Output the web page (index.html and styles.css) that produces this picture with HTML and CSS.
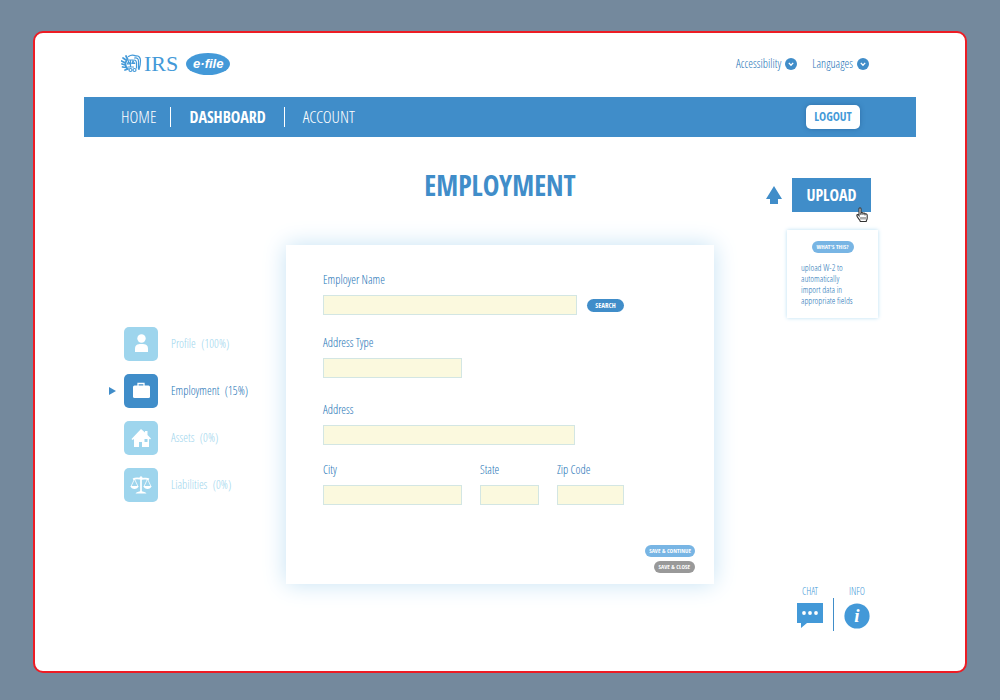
FILE: index.html
```html
<!DOCTYPE html>
<html lang="en">
<head>
<meta charset="utf-8">
<meta name="viewport" content="width=device-width, initial-scale=1">
<title>IRS e-file – Employment</title>
<link rel="stylesheet" href="styles.css">
</head>
<body>
<div class="screen">
  <header class="header">
    <a class="brand" href="#" aria-label="IRS e-file">
      <svg class="eagle" viewBox="0 0 42 38" fill="none" stroke="currentColor" stroke-width="2.4" stroke-linecap="round">
        <path d="M15 5c5-4 11-3 15-1M28 4c7-2 11 3 11 9s-1 12-3 18M27 8c6-1 8 2 8 7v15M26 12c4 0 5 3 5 7v9M14 12h10M19 13v13M15 15l-2 5h5zM24 14l-2 5h5zM14 26h11"/>
        <path d="M1 14l6 3M2 20l6 2M3 26l7 1M8 32l6-2M4 8l6 4M10 4l3 6M12 12c-4 5-4 12 1 18" stroke-width="3.500"/>
        <circle cx="19" cy="32" r="3"/><circle cx="27" cy="32" r="3"/>
      </svg>
      <span class="irs">IRS</span>
      <span class="efile">e·file</span>
    </a>
    <div class="tools">
      <button class="tool" type="button">Accessibility
        <svg class="chevron" viewBox="0 0 12 12"><circle cx="6" cy="6" r="6" fill="currentColor"/><path d="M3.800 4.900 6 7.300l2.200-2.400" fill="none" stroke="#fff" stroke-width="1.300"/></svg>
      </button>
      <button class="tool" type="button">Languages
        <svg class="chevron" viewBox="0 0 12 12"><circle cx="6" cy="6" r="6" fill="currentColor"/><path d="M3.800 4.900 6 7.300l2.200-2.400" fill="none" stroke="#fff" stroke-width="1.300"/></svg>
      </button>
    </div>
  </header>

  <nav class="nav" aria-label="Main">
    <a class="nav-link" href="#">HOME</a>
    <a class="nav-link current" href="#" aria-current="page">DASHBOARD</a>
    <a class="nav-link" href="#">ACCOUNT</a>
    <button class="logout" type="button">LOGOUT</button>
  </nav>

  <div class="content">
    <ul class="steps">
      <li><a class="step" href="#"><span class="step-icon"><svg viewBox="0 0 34 34" fill="#fff"><circle cx="17.500" cy="11.500" r="4.200"/><path d="M11 25v-3c0-4 2-5 6.500-5s6.500 1 6.500 5v3z"/></svg></span>Profile&nbsp; (100%)</a></li>
      <li><a class="step active" href="#" aria-current="step"><span class="step-icon"><svg viewBox="0 0 34 34"><path d="M14 12V9.500h6V12" fill="none" stroke="#fff" stroke-width="1.300"/><rect x="9" y="11.500" width="17" height="12.500" rx="1.500" fill="#fff"/></svg></span>Employment&nbsp; (15%)</a></li>
      <li><a class="step" href="#"><span class="step-icon"><svg viewBox="0 0 34 34" fill="#fff"><path fill-rule="evenodd" d="M17 8l4 3.500V10h2.500v4L27 17.500l-1 1-1-.8V26h-7v-5h-3v5H10v-8l-1.500 1-1-1zM20.500 18v3h3v-3z"/></svg></span>Assets&nbsp; (0%)</a></li>
      <li><a class="step" href="#"><span class="step-icon"><svg viewBox="0 0 34 34" fill="none" stroke="#fff"><path d="M9 11.200c3-1.400 5-.8 8-.4s5-1 8 .4M17 9v15" stroke-width="1.700"/><path d="M10.500 11 7 18.500M10.500 11l3.500 7.500M23.500 11 20 18.500M23.500 11l3.500 7.500" stroke-width=".8"/><path d="M6.500 18h8c-.5 4-7.500 4-8 0zM19.500 18h8c-.5 4-7.500 4-8 0zM11.500 25.500c1-2 3-1.500 5.500-2.500 2.500 1 4.500.5 5.500 2.500z" fill="#fff" stroke="none"/><circle cx="17" cy="9.800" r="1.500" fill="#fff" stroke="none"/></svg></span>Liabilities&nbsp; (0%)</a></li>
    </ul>

    <main class="main">
      <h1 class="title">EMPLOYMENT</h1>
      <form class="card">
        <div class="row">
          <div class="field name"><label for="employer">Employer Name</label><input id="employer" type="text"></div>
          <button class="pill search" type="button">SEARCH</button>
        </div>
        <div class="field medium"><label for="type">Address Type</label><input id="type" type="text"></div>
        <div class="field long"><label for="address">Address</label><input id="address" type="text"></div>
        <div class="row city-row">
          <div class="field medium"><label for="city">City</label><input id="city" type="text"></div>
          <div class="field state"><label for="state">State</label><input id="state" type="text"></div>
          <div class="field zip"><label for="zip">Zip Code</label><input id="zip" type="text"></div>
        </div>
        <div class="actions">
          <button class="pill light" type="submit">SAVE &amp; CONTINUE</button>
          <button class="pill gray" type="button">SAVE &amp; CLOSE</button>
        </div>
      </form>
    </main>

    <aside class="side">
      <div class="upload-row">
        <svg class="arrow" viewBox="0 0 16 18"><path d="M8 0l8 13h-4v5H4v-5H0z" fill="currentColor"/></svg>
        <div class="upload-wrap">
          <button class="upload" type="button">UPLOAD</button>
          <svg class="hand" viewBox="0 0 12 15"><path d="M3 8.500V2c0-1.700 2-1.700 2 0v4c.5-.8 1.800-.5 2 .4.600-.7 1.800-.3 2 .6 1-.6 2.200 0 2.200 1.200V11c0 2-1 2.300-1 3.500H4.300C4 12.500 1 10.500.8 8.500c0-1.200 1.500-1.200 2.200 0z" fill="#fff" stroke="#333" stroke-width="1.100"/><path d="M5 10v2.500M7 10v2.500M9 10v2.500M5 6v2M7 6.500V8M9 7v1.500" stroke="#333" stroke-width=".8"/></svg>
        </div>
      </div>
      <div class="tip">
        <button class="pill light" type="button">WHAT'S THIS?</button>
        <p class="tip-text">upload W-2 to automatically import data in appropriate fields</p>
      </div>
      <div class="help">
        <a class="help-link" href="#">CHAT
          <svg class="help-icon" viewBox="0 0 26 26"><path d="M0 0h26v20H10l-6 5v-5H0z" fill="currentColor"/><g fill="#fff"><circle cx="7" cy="10" r="1.900"/><circle cx="13" cy="10" r="1.900"/><circle cx="19" cy="10" r="1.900"/></g></svg>
        </a>
        <span class="divider"></span>
        <a class="help-link" href="#">INFO
          <svg class="help-icon" viewBox="0 0 26 26"><circle cx="13" cy="13" r="12.600" fill="currentColor"/><text class="info-i" x="13" y="19" text-anchor="middle">i</text></svg>
        </a>
      </div>
    </aside>
  </div>
</div>
</body>
</html>
```
FILE: styles.css
```css
:root {
  --blue: #408dc9;
  --sky: #4399d8;
  --deep: #2474b6;
  --pale: #9ed5ed;
  --narrow: "Open Sans Condensed Light", "Roboto Condensed", Roboto, sans-serif;
  --narrow-bold: "Open Sans Condensed", "Roboto Condensed", Roboto, sans-serif;
}
* { box-sizing: border-box; }
body {
  margin: 0;
  padding: 31px 33px 27px;
  min-height: 100vh;
  display: flex;
  background: #74899d;
  color: var(--blue);
  font: 300 12px/16px var(--narrow);
}
button, input { font: inherit; color: inherit; }
button { border: 0; padding: 0; background: none; cursor: pointer; }
a { color: inherit; text-decoration: none; }
svg { display: block; flex: none; }

.screen {
  flex: 1;
  display: flex;
  flex-direction: column;
  padding: 0 49px;
  background: #fff;
  border: 2px solid #ed1c24;
  border-radius: 10px;
}

.header {
  display: flex;
  justify-content: space-between;
  align-items: center;
  height: 64px;
  padding: 0 47px 3px 37px;
}
.brand { display: flex; align-items: center; color: var(--sky); }
.eagle { width: 21px; height: 19px; }
.irs { margin-left: 2px; font: 22px/24px "Liberation Serif", serif; }
.efile {
  width: 44px;
  margin-left: 8px;
  border-radius: 50%;
  background: var(--sky);
  color: #fff;
  font: italic bold 13px/22px "Liberation Sans", sans-serif;
  text-align: center;
}
.tools { display: flex; gap: 15px; color: var(--deep); }
.tool { display: flex; align-items: center; gap: 4px; font-size: 12px; }
.chevron { width: 12px; height: 12px; color: var(--blue); }

.nav {
  display: flex;
  align-items: center;
  height: 40px;
  padding: 0 56px 0 37px;
  background: var(--blue);
  color: #fff;
}
.nav-link { font-size: 17px; line-height: 20px; }
.nav-link + .nav-link { margin-left: 14px; padding-left: 18px; border-left: 1px solid #fff; }
.nav .current { font-family: var(--narrow-bold); font-size: 16px; font-weight: 700; }
.nav .current + .nav-link { margin-left: 18px; }
.logout {
  width: 54px;
  height: 24px;
  margin-left: auto;
  border-radius: 5px;
  background: #fff;
  box-shadow: 0 0 5px rgba(20, 70, 120, .4);
  color: var(--sky);
  font: 700 12px/16px var(--narrow-bold);
}

.content {
  flex: 1;
  display: grid;
  grid-template-columns: 1fr minmax(auto, 428px) 1fr;
}

.steps {
  display: grid;
  align-content: start;
  gap: 13px;
  margin: 0;
  padding: 190px 0 0 40px;
  list-style: none;
}
.step { position: relative; display: flex; align-items: center; gap: 13px; color: var(--pale); }
.step-icon { width: 34px; height: 34px; border-radius: 5px; background: var(--pale); }
.step.active { color: var(--deep); }
.active .step-icon { background: var(--blue); }
.active::before {
  content: "";
  position: absolute;
  left: -15px;
  border: solid transparent;
  border-width: 4px 0 4px 7px;
  border-left-color: var(--blue);
}

.main { padding-top: 30px; }
.title { margin: 0 0 42px; text-align: center; font: 700 28px/36px var(--narrow-bold); }
.card {
  padding: 27px 19px 11px 37px;
  background: #fff;
  box-shadow: 0 0 22px #c5e2f4;
}
.field { margin-bottom: 20px; }
.field label { display: block; margin-bottom: 7px; color: var(--deep); }
.field input {
  display: block;
  width: 100%;
  height: 20px;
  padding: 0 4px;
  border: 1px solid #d3e6e3;
  background: #fbf9de;
}
.row { display: flex; gap: 10px; }
.name { width: 254px; }
.medium { width: 139px; }
.long { width: 252px; margin-bottom: 17px; }
.card > .medium { margin-bottom: 24px; }
.city-row { gap: 18px; }
.state { width: 59px; }
.zip { width: 67px; }
.pill {
  height: 12px;
  padding: 0 4px;
  border-radius: 7px;
  color: #fff;
  font: 700 6px/12px var(--narrow-bold);
  white-space: nowrap;
}
.search { align-self: flex-end; width: 37px; height: 13px; margin-bottom: 23px; background: var(--blue); font-size: 7px; }
.light { background: #78b5e4; }
.gray { padding: 0 5px; background: #999; }
.actions { display: flex; flex-direction: column; align-items: flex-end; gap: 4px; margin-top: 20px; }

.side { display: flex; flex-direction: column; padding: 41px 38px 40px 0; }
.upload-row { display: flex; align-items: center; justify-content: flex-end; gap: 10px; padding-right: 7px; }
.arrow { width: 16px; height: 18px; }
.upload-wrap { position: relative; }
.upload { width: 79px; height: 34px; background: var(--blue); color: #fff; font: 700 16px/24px var(--narrow-bold); }
.hand { position: absolute; right: 3px; bottom: -10px; width: 12px; height: 15px; }
.tip {
  align-self: flex-end;
  width: 91px;
  margin-top: 18px;
  padding: 11px 14px 12px;
  background: #fff;
  box-shadow: 0 0 4px #b9def3;
}
.tip .pill { display: block; width: 42px; margin: 0 auto; }
.tip-text { margin: 9px 6px 0 0; color: var(--deep); font-size: 9px; line-height: 11px; }
.help { display: flex; justify-content: flex-end; gap: 10px; margin-top: auto; padding-right: 8px; color: var(--sky); }
.help-link { display: flex; flex-direction: column; align-items: center; gap: 4px; height: 48px; font-size: 10px; }
.divider { align-self: flex-end; width: 1px; height: 33px; background: var(--blue); }
.help-icon { width: 26px; height: 26px; }
.info-i { fill: #fff; font: italic bold 19px "Liberation Serif", serif; }
```
